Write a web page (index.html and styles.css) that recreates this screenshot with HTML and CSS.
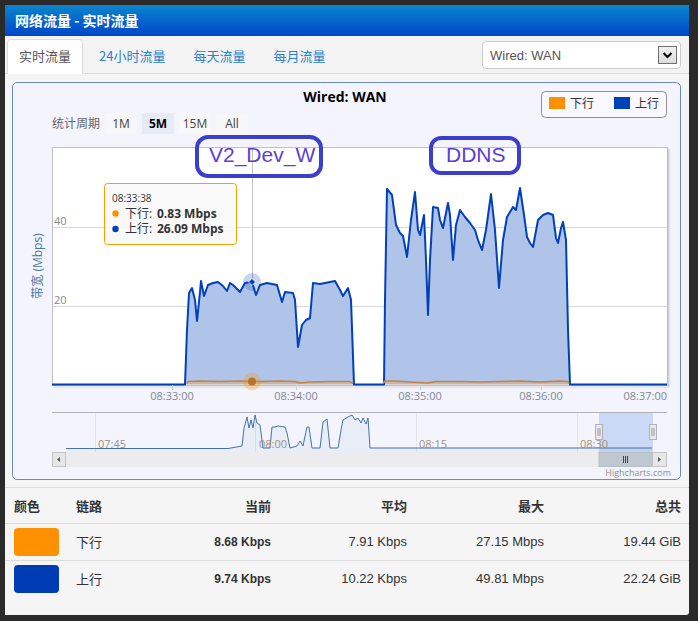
FILE: index.html
```html
<!DOCTYPE html>
<html lang="zh">
<head>
<meta charset="utf-8">
<title>实时流量</title>
<link rel="stylesheet" href="styles.css">
</head>
<body>
<div class="panel">
  <div class="head">网络流量 - 实时流量</div>
  <div class="tabbar">
    <ul class="tabs">
      <li class="tab active">实时流量</li>
      <li class="tab">24小时流量</li>
      <li class="tab">每天流量</li>
      <li class="tab">每月流量</li>
    </ul>
    <div class="select">
      <span class="select-text">Wired: WAN</span>
      <span class="select-arrow"><svg width="17" height="16" viewBox="0 0 17 16"><polyline points="4.5,6 8.5,10 12.5,6" fill="none" stroke="#000" stroke-width="2"/></svg></span>
    </div>
  </div>
  <div class="chart">
    <svg class="chart-svg" width="667" height="396" viewBox="13 83 667 396">
      <!-- title -->
      <text class="t-title" x="345" y="102" text-anchor="middle">Wired: WAN</text>
      <!-- legend -->
      <rect x="541.5" y="91.5" width="125" height="26" rx="4" fill="#f8f8fd" stroke="#909090"/>
      <rect x="549" y="97" width="16" height="12" fill="#ff9000"/>
      <text class="t-legend" x="570" y="108">下行</text>
      <rect x="614" y="97" width="16" height="12" fill="#0040b8"/>
      <text class="t-legend" x="635" y="108">上行</text>
      <!-- range selector -->
      <text class="t-range-label" x="52" y="127.5">统计周期</text>
      <rect x="105" y="113" width="32" height="21" fill="#f7f7f7"/>
      <text class="t-btn" x="121" y="127.5" text-anchor="middle">1M</text>
      <rect x="142" y="113" width="32" height="21" fill="#e6ebf5"/>
      <text class="t-btn t-btn-on" x="158" y="127.5" text-anchor="middle">5M</text>
      <rect x="179" y="113" width="32" height="21" fill="#f7f7f7"/>
      <text class="t-btn" x="195" y="127.5" text-anchor="middle">15M</text>
      <rect x="216" y="113" width="32" height="21" fill="#f7f7f7"/>
      <text class="t-btn" x="232" y="127.5" text-anchor="middle">All</text>
      <!-- plot background and shadow -->
      <line x1="669" y1="149" x2="669" y2="387" stroke="rgba(0,0,0,0.06)" stroke-width="3"/>
      <line x1="54" y1="387" x2="669" y2="387" stroke="rgba(0,0,0,0.05)" stroke-width="3"/>
      <line x1="668.5" y1="148" x2="668.5" y2="386" stroke="rgba(0,0,0,0.1)"/>
      <rect x="52.5" y="147.5" width="615" height="238" fill="#fff" stroke="#c0c0c0"/>
      <!-- grid -->
      <line x1="53" y1="227.5" x2="667" y2="227.5" stroke="#d8d8d8"/>
      <line x1="53" y1="306.5" x2="667" y2="306.5" stroke="#d8d8d8"/>
      <!-- crosshair -->
      <line x1="252.5" y1="148" x2="252.5" y2="385" stroke="#c0c0c0"/>
      <!-- y labels -->
      <text class="t-axis" x="54" y="225">40</text>
      <text class="t-axis" x="54" y="304">20</text>
      <text class="t-ytitle" transform="translate(42,266) rotate(-90)" text-anchor="middle">带宽 (Mbps)</text>
      <!-- upload series -->
      <polygon fill="#b0c4ea" points="52,384.5 185,384.5 187,330 189,293 192,288 195,300 197,321 200,292 201,281 204,296 208,285 213,283 218,282 223,286 227,291 230,283 233,285 237,289 240,292 245,283 252,282 256,295 260,285 267,283 272,284 277,285 282,302 285,292 293,293 295,300 298,347 302,325 306,320 310,318 313,283 320,284 325,283 330,282 335,281 340,290 343,296 348,288 351,300 354,384.5 384,384.5 385,300 387,189 392,195 396,225 400,233 403,236 407,257 411,220 415,192 418,230 420,235 424,215 426,260 428,315 430,260 433,207 438,208 440,220 443,228 448,203 450,215 453,260 456,225 460,210 465,217 470,223 475,230 478,240 482,250 486,230 491,194 495,230 499,288 503,240 507,217 513,207 516,210 520,188 524,215 527,237 530,243 533,247 538,220 543,215 548,213 553,215 556,238 558,243 561,228 563,222 566,240 568,330 570,384.5 667,384.5"/>
      <!-- download series -->
      <polygon fill="rgba(255,144,0,0.25)" points="186,384.5 188,381.5 200,381 220,381.5 240,381 260,381.5 280,381 295,381.5 300,383 310,382 330,381.5 350,381.5 354,384.5"/>
      <polygon fill="rgba(255,144,0,0.25)" points="382,384.5 385,381 395,381 410,382 428,383 435,381.5 460,381.5 480,382 500,381.5 520,381 540,382 560,381 568,381.5 570,384.5"/>
      <polyline fill="none" stroke="#0040b8" stroke-width="2" stroke-linejoin="round" points="52,384.5 185,384.5 187,330 189,293 192,288 195,300 197,321 200,292 201,281 204,296 208,285 213,283 218,282 223,286 227,291 230,283 233,285 237,289 240,292 245,283 252,282 256,295 260,285 267,283 272,284 277,285 282,302 285,292 293,293 295,300 298,347 302,325 306,320 310,318 313,283 320,284 325,283 330,282 335,281 340,290 343,296 348,288 351,300 354,384.5 384,384.5 385,300 387,189 392,195 396,225 400,233 403,236 407,257 411,220 415,192 418,230 420,235 424,215 426,260 428,315 430,260 433,207 438,208 440,220 443,228 448,203 450,215 453,260 456,225 460,210 465,217 470,223 475,230 478,240 482,250 486,230 491,194 495,230 499,288 503,240 507,217 513,207 516,210 520,188 524,215 527,237 530,243 533,247 538,220 543,215 548,213 553,215 556,238 558,243 561,228 563,222 566,240 568,330 570,384.5 667,384.5"/>
      <polyline fill="none" stroke="#c8823c" stroke-width="1.5" stroke-linejoin="round" points="187,383.5 188,381.5 200,381 220,381.5 240,381 260,381.5 280,381 295,381.5 300,383 310,382 330,381.5 350,381.5 353,383.5"/>
      <polyline fill="none" stroke="#c8823c" stroke-width="1.5" stroke-linejoin="round" points="383,383.5 385,381 395,381 410,382 428,383 435,381.5 460,381.5 480,382 500,381.5 520,381 540,382 560,381 568,381.5 569,383.5"/>
      <!-- markers -->
      <circle cx="252" cy="282" r="9" fill="rgba(0,64,184,0.22)"/>
      <rect x="249.5" y="279.5" width="5" height="5" fill="#0040b8" stroke="#fff" stroke-width="0.8" transform="rotate(45 252 282)"/>
      <circle cx="252" cy="381.5" r="9" fill="rgba(255,144,0,0.28)"/>
      <circle cx="252" cy="381.5" r="4" fill="#b8722e"/>
      <!-- x axis -->
      <g stroke="#c0d0e0">
        <line x1="172.5" y1="385" x2="172.5" y2="390"/>
        <line x1="296.5" y1="385" x2="296.5" y2="390"/>
        <line x1="420.5" y1="385" x2="420.5" y2="390"/>
        <line x1="541.5" y1="385" x2="541.5" y2="390"/>
      </g>
      <text class="t-axis t-x" x="172" y="400" text-anchor="middle">08:33:00</text>
      <text class="t-axis t-x" x="296" y="400" text-anchor="middle">08:34:00</text>
      <text class="t-axis t-x" x="420" y="400" text-anchor="middle">08:35:00</text>
      <text class="t-axis t-x" x="541" y="400" text-anchor="middle">08:36:00</text>
      <text class="t-axis t-x" x="667" y="400" text-anchor="end">08:37:00</text>
      <!-- annotations -->
      <rect x="197" y="137" width="124" height="39" rx="11" fill="none" stroke="#3c3fcc" stroke-width="4"/>
      <text class="t-note" x="209" y="162">V2_Dev_W</text>
      <rect x="431" y="138" width="88" height="35" rx="10" fill="none" stroke="#3c3fcc" stroke-width="4"/>
      <text class="t-note" x="446" y="162">DDNS</text>
      <!-- tooltip -->
      <rect x="104.5" y="183.5" width="132" height="61" rx="3" fill="rgba(248,248,248,0.9)" stroke="#f7a000"/>
      <text class="t-tip-time" x="112" y="201.5">08:33:38</text>
      <circle cx="115.5" cy="213.5" r="3.2" fill="#ff9000"/>
      <text class="t-tip" x="125" y="217.5">下行:</text>
      <text class="t-tip t-bold" x="157" y="217.5">0.83 Mbps</text>
      <circle cx="115.5" cy="229" r="3.2" fill="#0040b8"/>
      <text class="t-tip" x="125" y="233">上行:</text>
      <text class="t-tip t-bold" x="157" y="233">26.09 Mbps</text>
      <!-- navigator -->
      <g stroke="#e4e4ea">
        <line x1="95.5" y1="413" x2="95.5" y2="452"/>
        <line x1="255.5" y1="413" x2="255.5" y2="452"/>
        <line x1="416.5" y1="413" x2="416.5" y2="452"/>
        <line x1="577.5" y1="413" x2="577.5" y2="452"/>
      </g>
      <line x1="52" y1="412.5" x2="667" y2="412.5" stroke="#b2b1b6"/>
      <rect x="599" y="413" width="54" height="39" fill="rgba(120,165,235,0.35)"/>
      <polygon fill="rgba(69,114,167,0.06)" points="66,448.5 228,448.5 242,446 244,428 247,417 249,428 251,420 253,428 255,415 257,423 260,425 263,448 270,448 272,427 275,427 278,426 285,427 287,433 290,448 297,446 300,441 303,446 307,427 309,427 312,448 320,448 323,422 327,419 330,448 338,448 341,430 343,420 348,417 352,415 355,420 358,418 361,423 363,418 366,424 368,418 370,448 652,448 652,452 66,452"/>
      <polyline fill="none" stroke="#4572a7" stroke-width="1" stroke-linejoin="round" points="66,448.5 228,448.5 242,446 244,428 247,417 249,428 251,420 253,428 255,415 257,423 260,425 263,448 270,448 272,427 275,427 278,426 285,427 287,433 290,448 297,446 300,441 303,446 307,427 309,427 312,448 320,448 323,422 327,419 330,448 338,448 341,430 343,420 348,417 352,415 355,420 358,418 361,423 363,418 366,424 368,418 370,448 652,448"/>
      <text class="t-nav" x="98" y="448">07:45</text>
      <text class="t-nav" x="259" y="448">08:00</text>
      <text class="t-nav" x="419" y="448">08:15</text>
      <text class="t-nav" x="580" y="448">08:30</text>
      <!-- handles -->
      <rect x="595.5" y="424.5" width="7" height="15" fill="#ebe7e8" stroke="#b2b1b6"/>
      <line x1="598" y1="428" x2="598" y2="436" stroke="#999"/>
      <line x1="600" y1="428" x2="600" y2="436" stroke="#999"/>
      <rect x="649.5" y="424.5" width="7" height="15" fill="#ebe7e8" stroke="#b2b1b6"/>
      <line x1="652" y1="428" x2="652" y2="436" stroke="#999"/>
      <line x1="654" y1="428" x2="654" y2="436" stroke="#999"/>
      <!-- scrollbar -->
      <rect x="52" y="452" width="615" height="15" fill="#ececee"/>
      <rect x="52.5" y="452.5" width="13" height="14" fill="#e6e6e6" stroke="#c4c4c4"/>
      <polygon points="60,457 60,462 57,459.5" fill="#555"/>
      <rect x="599" y="452.5" width="53" height="14" fill="#bfc8d1" stroke="#b8c0c8"/>
      <g stroke="#444">
        <line x1="623.5" y1="456" x2="623.5" y2="463"/>
        <line x1="625.5" y1="456" x2="625.5" y2="463"/>
        <line x1="627.5" y1="456" x2="627.5" y2="463"/>
      </g>
      <rect x="652.5" y="452.5" width="14" height="14" fill="#e6e6e6" stroke="#c4c4c4"/>
      <polygon points="658,457 658,462 661,459.5" fill="#555"/>
      <text class="t-credit" x="671" y="476" text-anchor="end">Highcharts.com</text>
    </svg>
  </div>
  <table class="stats">
    <colgroup>
      <col class="c1"><col class="c2"><col class="c3"><col class="c4"><col class="c5"><col class="c6">
    </colgroup>
    <thead>
      <tr><th class="left">颜色</th><th class="left">链路</th><th>当前</th><th>平均</th><th>最大</th><th>总共</th></tr>
    </thead>
    <tbody>
      <tr><td class="left"><span class="swatch swatch-down"></span></td><td class="left cjk">下行</td><td class="cur">8.68 Kbps</td><td>7.91 Kbps</td><td>27.15 Mbps</td><td>19.44 GiB</td></tr>
      <tr><td class="left"><span class="swatch swatch-up"></span></td><td class="left cjk">上行</td><td class="cur">9.74 Kbps</td><td>10.22 Kbps</td><td>49.81 Mbps</td><td>22.24 GiB</td></tr>
    </tbody>
  </table>
</div>
</body>
</html>
```
FILE: styles.css
```css
html, body {
  margin: 0;
  padding: 0;
}
body {
  background: #2a2a2a;
  padding: 5px 0 0 5px;
  width: 698px;
  height: 621px;
  box-sizing: border-box;
  overflow: hidden;
  font-family: "Liberation Sans", "Noto Sans CJK SC", sans-serif;
  color: #333;
}
.panel {
  width: 684px;
  height: 610px;
  background: #f5f5f5;
  border-bottom-right-radius: 3px;
  display: flex;
  flex-direction: column;
}
.head {
  height: 31px;
  line-height: 31px;
  padding-left: 10px;
  color: #fff;
  font-weight: bold;
  font-size: 14px;
  font-family: "Noto Sans CJK SC", sans-serif;
  background: linear-gradient(#0a86cd, #0045c9);
}
.tabbar {
  height: 37px;
  border-bottom: 1px solid #dcdcdc;
  display: flex;
  align-items: flex-end;
  background: #f3f3f3;
}
.tabs {
  list-style: none;
  margin: 0 0 -1px 2px;
  padding: 0;
  display: flex;
  gap: 4px;
}
.tab {
  height: 34px;
  line-height: 32px;
  padding: 0 11px;
  border: 1px solid transparent;
  border-bottom: none;
  font-size: 13px;
  font-family: "Noto Sans CJK SC", sans-serif;
  color: #2a7fcf;
  box-sizing: border-box;
}
.tab.active {
  background: #fff;
  border-color: #dcdcdc;
  border-radius: 4px 4px 0 0;
  color: #555;
  height: 35px;
}
.select {
  margin-left: auto;
  margin-right: 8px;
  align-self: center;
  margin-top: 1px;
  width: 199px;
  height: 28px;
  box-sizing: border-box;
  border: 1px solid #ccc;
  border-radius: 4px;
  background: #fff;
  display: flex;
  align-items: center;
  justify-content: space-between;
  padding: 0 3px 0 7px;
}
.select-text {
  font-size: 13px;
  color: #555;
}
.select-arrow {
  width: 19px;
  height: 18px;
  box-sizing: border-box;
  border: 1px solid #707070;
  background: linear-gradient(#f2f2f2, #dcdcdc);
  display: flex;
  align-items: center;
  justify-content: center;
}
.chart {
  margin: 8px 8px 0 7px;
  height: 396px;
  border: 1px solid #6a8cc3;
  border-radius: 5px;
  background: #f4f5fc;
  overflow: hidden;
}
.chart-svg {
  display: block;
  font-family: "Open Sans", "Noto Sans CJK SC", sans-serif;
}
.t-title { font-size: 14px; font-weight: bold; fill: #000; }
.t-legend { font-size: 12px; fill: #333; }
.t-range-label { font-size: 12px; fill: #666; }
.t-btn { font-size: 12px; fill: #444; }
.t-btn-on { font-weight: bold; fill: #000; }
.t-axis { font-size: 11px; fill: #888; }
.t-x { fill: #7f8797; }
.t-ytitle { font-size: 12px; fill: #4d759e; }
.t-note { font-size: 21px; fill: #5b3fd3; font-family: "Liberation Sans", sans-serif; }
.t-tip-time { font-size: 10px; fill: #333; }
.t-tip { font-size: 12px; fill: #333; }
.t-bold { font-weight: bold; }
.t-nav { font-size: 11px; fill: #a0907c; }
.t-credit { font-size: 9px; fill: #909090; }
.stats {
  margin-top: 7px;
  width: 684px;
  border-collapse: collapse;
  table-layout: fixed;
}
.c1 { width: 62px; }
.c2 { width: 90px; }
.c3 { width: 122px; }
.c4 { width: 136px; }
.c5 { width: 137px; }
.c6 { width: 137px; }
.stats th, .stats td {
  border-top: 1px solid #dcdcdc;
  padding: 0 8px 0 9px;
  text-align: right;
  font-size: 13px;
  color: #333;
  line-height: 16px;
}
.stats th {
  height: 35px;
  font-weight: bold;
  font-family: "Noto Sans CJK SC", sans-serif;
}
.stats td {
  height: 36px;
}
.stats .left { text-align: left; }
.stats .cjk { font-family: "Noto Sans CJK SC", sans-serif; }
.stats .cur { font-weight: bold; font-size: 12px; }
.swatch {
  display: block;
  width: 45px;
  height: 28px;
  border-radius: 4px;
}
.swatch-down { background: #ff9100; }
.swatch-up { background: #003cb4; }
```
